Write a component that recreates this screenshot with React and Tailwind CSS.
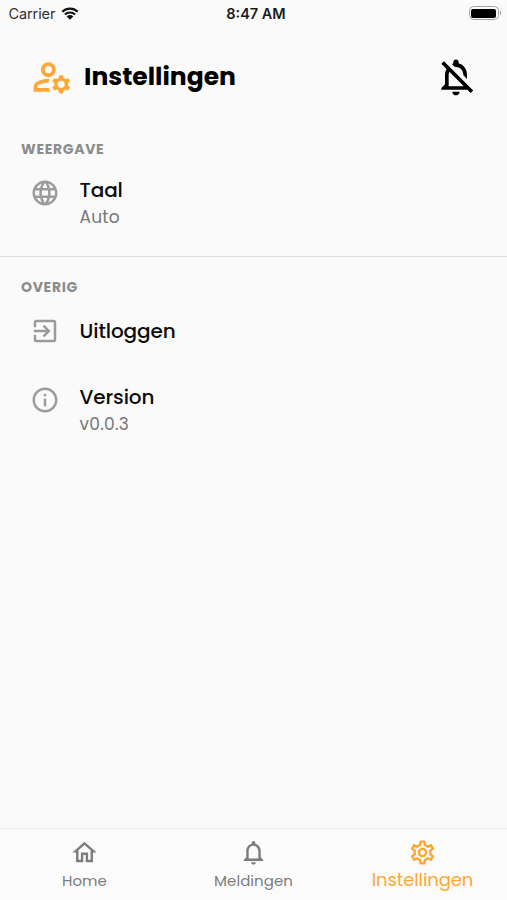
import React, { useState } from 'react';
import {
  MdOutlineManageAccounts,
  MdOutlineNotificationsOff,
  MdOutlineNotifications,
  MdLanguage,
  MdExitToApp,
  MdOutlineInfo,
  MdOutlineHome,
  MdOutlineSettings,
} from 'react-icons/md';

const tabs = [
  { name: 'Home', icon: MdOutlineHome },
  { name: 'Meldingen', icon: MdOutlineNotifications },
  { name: 'Instellingen', icon: MdOutlineSettings },
];

function StatusBar() {
  return (
    <div className="grid h-7 grid-cols-3 items-center font-['Inter',sans-serif] text-[14.5px] leading-7">
      <div className="flex items-center gap-1.5 pl-[8.5px] text-[#303030]">
        <span className="tracking-[-0.1px]">Carrier</span>
        <svg viewBox="0 0 18 13" className="mb-0.5 h-[13px] w-[18px]">
          <path d="M1.3 4.8a11 11 0 0 1 15.4 0M3.9 7.6a7.3 7.3 0 0 1 10.2 0" fill="none" stroke="#111" strokeWidth="2.1" />
          <path d="M5.7 9.4a4.7 4.7 0 0 1 6.6 0L9 12.8z" fill="#111" />
        </svg>
      </div>
      <span className="pl-[5px] text-center font-semibold text-[#1b1b1b]">8:47 AM</span>
      <div className="flex items-center justify-end pr-[6px] pb-[2px]">
        <div className="h-[14px] w-[30px] rounded-[4.5px] border border-[#a3a3a3] p-[1.5px]">
          <div className="h-full rounded-[2px] bg-black" />
        </div>
        <div className="ml-px h-1 w-[1.5px] rounded-r bg-[#999]" />
      </div>
    </div>
  );
}

function SectionTitle({ children }) {
  return (
    <h2 className="pl-[21px] text-sm leading-5 font-bold tracking-[0.7px] text-[#8a8d8c]">{children}</h2>
  );
}

function SettingRow({ icon: Icon, title, description }) {
  return (
    <button className="flex w-full pl-[30px] text-left">
      {/* Sin descripción el icono queda centrado con el título */}
      <Icon className={`size-[30px] shrink-0 text-[#9b9b9b] ${description ? 'mt-[3px]' : ''}`} />
      <span className="ml-[19.5px] flex flex-col">
        <span className="text-xl leading-[30px] font-medium tracking-[-0.1px] text-[#0c0c0c]">{title}</span>
        {description && (
          <span className="text-[17px] leading-6 tracking-[0.25px] text-[#777]">{description}</span>
        )}
      </span>
    </button>
  );
}

function App() {
  const [activeTab, setActiveTab] = useState('Instellingen');

  return (
    <div className="flex h-screen w-full flex-col overflow-hidden bg-[#fafafa] font-['Poppins','Inter',sans-serif]">
      <StatusBar />

      {/* Header */}
      <header className="flex h-[98px] items-center justify-between pr-[29px] pl-[30px]">
        <div className="flex items-center">
          <MdOutlineManageAccounts className="size-11 text-[#ffa733]" />
          <h1 className="ml-2.5 text-[25px] leading-9 font-bold text-black">Instellingen</h1>
        </div>
        <button aria-label="Meldingen uit">
          <MdOutlineNotificationsOff className="size-11 text-black" />
        </button>
      </header>

      {/* Instellingen */}
      <main className="flex-1">
        <section className="h-[131px] border-b border-[#dedede] pt-[13px]">
          <SectionTitle>WEERGAVE</SectionTitle>
          <div className="mt-4">
            <SettingRow icon={MdLanguage} title="Taal" description="Auto" />
          </div>
        </section>
        <section className="pt-5">
          <SectionTitle>OVERIG</SectionTitle>
          <div className="mt-[19px]">
            <SettingRow icon={MdExitToApp} title="Uitloggen" />
          </div>
          <div className="mt-9">
            <SettingRow icon={MdOutlineInfo} title="Version" description="v0.0.3" />
          </div>
        </section>
      </main>

      {/* Barra inferior */}
      <nav className="grid h-[72px] grid-cols-3 border-t border-[#eeeeee] bg-[#fbfbfb]">
        {tabs.map(({ name, icon: Icon }) => (
          <button
            key={name}
            onClick={() => setActiveTab(name)}
            className={`flex flex-col items-center pt-[9px] ${activeTab === name ? 'text-[#ffa733]' : 'text-[#7b7d7c]'}`}
          >
            <Icon className="size-[29px]" />
            <span className={activeTab === name ? 'text-[18px] leading-[26px] tracking-[-0.1px]' : 'text-[15px] leading-[28px] tracking-[0.05px]'}>
              {name}
            </span>
          </button>
        ))}
      </nav>
    </div>
  );
}

export default App;
